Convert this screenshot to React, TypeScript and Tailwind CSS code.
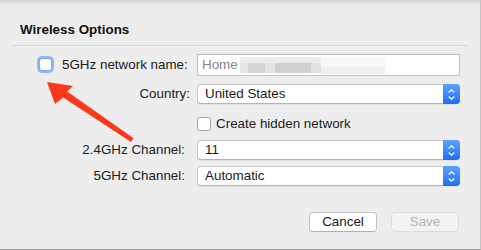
import { ReactNode } from "react";

const Stepper = () => (
  <div className="flex w-[17px] -my-px -mr-px flex-col items-center justify-center gap-[3px] rounded-r-[4px] bg-gradient-to-b from-[#5aa2ff] to-[#1c6ef2]">
    <svg width="7" height="4" viewBox="0 0 7 4">
      <path d="M0.7 3.5 L3.5 0.8 L6.3 3.5" fill="none" stroke="white" strokeWidth="1.2" />
    </svg>
    <svg width="7" height="4" viewBox="0 0 7 4">
      <path d="M0.7 0.5 L3.5 3.2 L6.3 0.5" fill="none" stroke="white" strokeWidth="1.2" />
    </svg>
  </div>
);

const Select = ({ value }: { value: string }) => (
  <div className="flex h-[20px] w-[263px] rounded-[4px] border border-[#c9c9c9] border-b-[#b4b4b4] bg-white shadow-[0_0.5px_0.5px_rgba(0,0,0,0.08)]">
    <div className="flex-1 pl-[7px] leading-[18px] text-[#1a1a1a]">{value}</div>
    <Stepper />
  </div>
);

const Row = ({ label, pr, children }: { label: string; pr: string; children: ReactNode }) => (
  <div className="flex h-[20px] items-center">
    <div className={`w-[197px] text-right ${pr}`}>{label}</div>
    {children}
  </div>
);

export default function App() {
  return (
    <div className="relative flex h-[250px] w-[481px] flex-col overflow-hidden border-r border-b border-r-[#c4c4c4] border-b-[#9a9a9a] bg-[#ededed] text-[13.4px] text-[#1c1c1c] [font-family:'Helvetica_Neue','Liberation_Sans',Arial,sans-serif]">
      <div className="absolute inset-x-0 top-0 h-[5px] bg-gradient-to-b from-[#d2d2d2] to-[#ededed]" />

      <div className="relative mt-[22px] pl-[20px] font-bold leading-[16px] text-[#111]">Wireless Options</div>
      <div className="mx-[12px] mt-[7px] h-px bg-[#d6d6d6]" />

      {/* network name */}
      <div className="mt-[8px] flex h-[22px] items-center">
        <div className="flex w-[197px] items-center">
          <div className="ml-[37px] h-[17px] w-[17px] rounded-[5px] bg-[#93bbf3] p-[2px]">
            <div className="h-full w-full rounded-[3px] border border-[#78a6ea] bg-white" />
          </div>
          <span className="ml-[8px] whitespace-nowrap">5GHz network name:</span>
        </div>
        <div className="flex h-[22px] w-[263px] items-center border border-[#c6c6c6] border-t-[#b9b9b9] bg-white pl-[4px]">
          <span className="text-[#858585]">Home</span>
          <div className="ml-[2px] flex h-[17px] flex-col">
            <div className="h-[6px] w-[81px] bg-[#ececec]" />
            <div className="flex h-[10px]">
              <div className="w-[8px] bg-[#e6e6e6]" />
              <div className="w-[17px] bg-[#d6d6d6]" />
              <div className="w-[10px] bg-[#e4e4e4]" />
              <div className="w-[36px] bg-[#d0d0d0]" />
              <div className="w-[10px] bg-[#e2e2e2]" />
            </div>
          </div>
          <div className="flex h-[17px] w-[64px] flex-col">
            <div className="h-[10px] bg-[#f8f8f8]" />
            <div className="h-[7px] bg-[#efefef]" />
          </div>
        </div>
      </div>

      <div className="mt-[8px]">
        <Row label="Country:" pr="pr-[7px]">
          <Select value="United States" />
        </Row>
      </div>

      {/* hidden network */}
      <div className="mt-[10px] flex h-[20px] items-center pl-[197px]">
        <div className="h-[14px] w-[14px] rounded-[3px] border border-[#a8a8a8] bg-white" />
        <span className="ml-[5px]">Create hidden network</span>
      </div>

      <div className="mt-[6px]">
        <Row label="2.4GHz Channel:" pr="pr-[12px]">
          <Select value="11" />
        </Row>
      </div>
      <div className="mt-[6px]">
        <Row label="5GHz Channel:" pr="pr-[12px]">
          <Select value="Automatic" />
        </Row>
      </div>

      <div className="mt-[26px] flex justify-end gap-[14px] pr-[21px]">
        <button className="h-[20px] w-[68px] rounded-[4px] border border-[#c6c6c6] border-b-[#b0b0b0] bg-white leading-[18px] text-[#1a1a1a]">
          Cancel
        </button>
        <button className="h-[20px] w-[68px] rounded-[4px] border border-[#dcdcdc] bg-[#f3f3f3] leading-[18px] text-[#b4b4b4]">
          Save
        </button>
      </div>

      <svg className="pointer-events-none absolute left-0 top-0" width="481" height="250">
        <polygon
          points="47,82 73,86 67.2,91.6 133.6,138.3 131,142 63.2,97.4 55,104"
          fill="#f8391c"
        />
      </svg>
    </div>
  );
}
